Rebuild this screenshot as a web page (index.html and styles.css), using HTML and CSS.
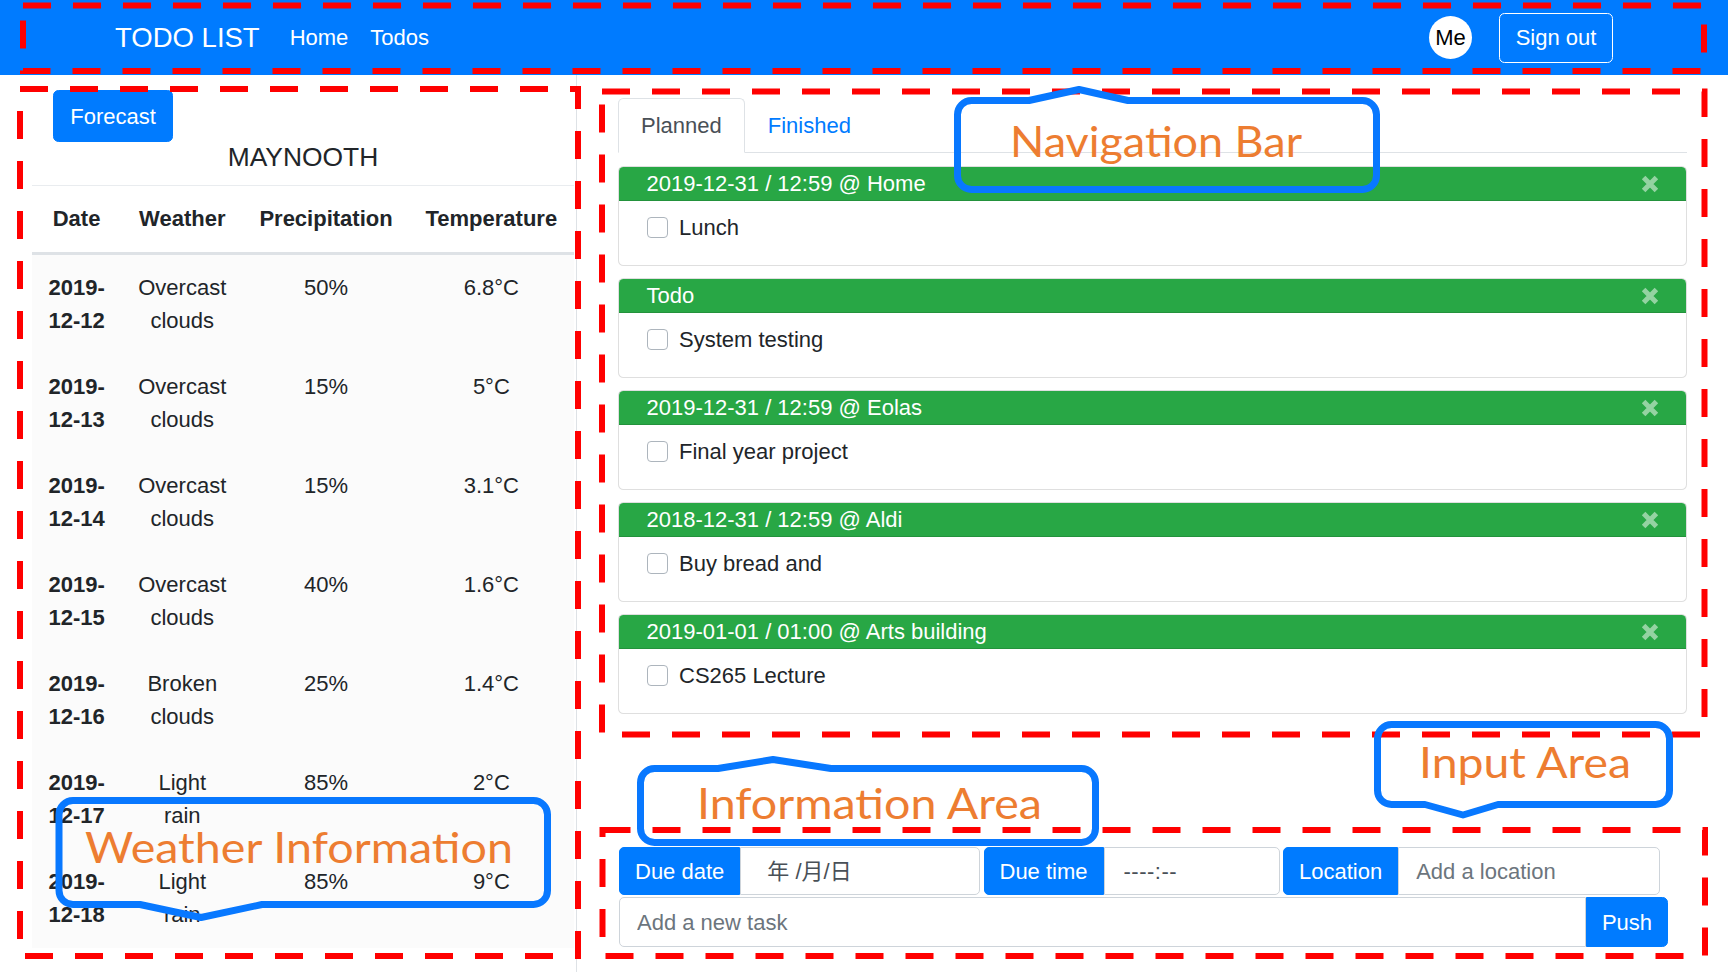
FILE: index.html
```html
<!DOCTYPE html>
<html lang="en">
<head>
<meta charset="utf-8">
<title>TODO LIST</title>
<link rel="stylesheet" href="styles.css">
</head>
<body>
<nav class="navbar">
  <a class="brand" href="#">TODO LIST</a>
  <a class="nav-link" href="#">Home</a>
  <a class="nav-link" href="#">Todos</a>
  <span class="spacer"></span>
  <span class="avatar">Me</span>
  <button class="btn-signout" type="button">Sign out</button>
</nav>

<main class="page">
  <aside class="weather-col">
    <button class="btn-forecast" type="button">Forecast</button>
    <h2 class="city">MAYNOOTH</h2>
    <table class="weather-table">
      <thead>
        <tr>
          <th class="col-date">Date</th>
          <th class="col-weather">Weather</th>
          <th class="col-precip">Precipitation</th>
          <th class="col-temp">Temperature</th>
        </tr>
      </thead>
      <tbody>
        <tr><td class="date">2019-12-12</td><td>Overcast clouds</td><td>50%</td><td>6.8°C</td></tr>
        <tr><td class="date">2019-12-13</td><td>Overcast clouds</td><td>15%</td><td>5°C</td></tr>
        <tr><td class="date">2019-12-14</td><td>Overcast clouds</td><td>15%</td><td>3.1°C</td></tr>
        <tr><td class="date">2019-12-15</td><td>Overcast clouds</td><td>40%</td><td>1.6°C</td></tr>
        <tr><td class="date">2019-12-16</td><td>Broken clouds</td><td>25%</td><td>1.4°C</td></tr>
        <tr><td class="date">2019-12-17</td><td>Light rain</td><td>85%</td><td>2°C</td></tr>
        <tr><td class="date">2019-12-18</td><td>Light rain</td><td>85%</td><td>9°C</td></tr>
      </tbody>
    </table>
  </aside>

  <section class="todo-col">
    <ul class="tabs">
      <li class="tab active">Planned</li>
      <li class="tab">Finished</li>
    </ul>

    <div class="cards">
      <div class="card">
        <div class="card-header"><span>2019-12-31 / 12:59 @ Home</span>
          <svg class="close" width="18" height="18" viewBox="0 0 18 18"><path d="M2.6 2.6L15.4 15.4M15.4 2.6L2.6 15.4"/></svg></div>
        <div class="card-body"><span class="check"></span><span>Lunch</span></div>
      </div>
      <div class="card">
        <div class="card-header"><span>Todo</span>
          <svg class="close" width="18" height="18" viewBox="0 0 18 18"><path d="M2.6 2.6L15.4 15.4M15.4 2.6L2.6 15.4"/></svg></div>
        <div class="card-body"><span class="check"></span><span>System testing</span></div>
      </div>
      <div class="card">
        <div class="card-header"><span>2019-12-31 / 12:59 @ Eolas</span>
          <svg class="close" width="18" height="18" viewBox="0 0 18 18"><path d="M2.6 2.6L15.4 15.4M15.4 2.6L2.6 15.4"/></svg></div>
        <div class="card-body"><span class="check"></span><span>Final year project</span></div>
      </div>
      <div class="card">
        <div class="card-header"><span>2018-12-31 / 12:59 @ Aldi</span>
          <svg class="close" width="18" height="18" viewBox="0 0 18 18"><path d="M2.6 2.6L15.4 15.4M15.4 2.6L2.6 15.4"/></svg></div>
        <div class="card-body"><span class="check"></span><span>Buy bread and</span></div>
      </div>
      <div class="card">
        <div class="card-header"><span>2019-01-01 / 01:00 @ Arts building</span>
          <svg class="close" width="18" height="18" viewBox="0 0 18 18"><path d="M2.6 2.6L15.4 15.4M15.4 2.6L2.6 15.4"/></svg></div>
        <div class="card-body"><span class="check"></span><span>CS265 Lecture</span></div>
      </div>
    </div>

    <form class="input-area">
      <div class="meta-row">
        <div class="group group-date">
          <span class="group-label">Due date</span>
          <input class="field field-date" type="text" value="年 /月/日">
        </div>
        <div class="group group-time">
          <span class="group-label">Due time</span>
          <input class="field field-time" type="text" value="----:--">
        </div>
        <div class="group group-loc">
          <span class="group-label">Location</span>
          <input class="field" type="text" placeholder="Add a location">
        </div>
      </div>
      <div class="task-row">
        <input class="field field-task" type="text" placeholder="Add a new task">
        <button class="btn-push" type="button">Push</button>
      </div>
    </form>
  </section>
</main>

<svg class="annotations" width="1728" height="972" viewBox="0 0 1728 972">
  <g class="dash">
    <rect x="23" y="5.5" width="1681" height="65.5"/>
    <rect x="20" y="89" width="558" height="867"/>
    <rect x="602" y="91.5" width="1102.5" height="643"/>
    <rect x="602.5" y="830" width="1102.5" height="126"/>
  </g>
  <g class="callout">
    <path d="M971.5 100.5 L1029 100.5 L1079 89.5 L1128 100.5 L1362.5 100.5 A14 14 0 0 1 1376.5 114.5 L1376.5 175.5 A14 14 0 0 1 1362.5 189.5 L971.5 189.5 A14 14 0 0 1 957.5 175.5 L957.5 114.5 A14 14 0 0 1 971.5 100.5 Z"/>
    <path d="M73 800.5 L533.5 800.5 A14 14 0 0 1 547.5 814.5 L547.5 890.5 A14 14 0 0 1 533.5 904.5 L262 904.5 L201 917.5 L140 904.5 L73 904.5 A14 14 0 0 1 59 890.5 L59 814.5 A14 14 0 0 1 73 800.5 Z"/>
    <path d="M654.5 768.5 L718 768.5 L773 759.5 L831 768.5 L1081.5 768.5 A14 14 0 0 1 1095.5 782.5 L1095.5 828.5 A14 14 0 0 1 1081.5 842.5 L654.5 842.5 A14 14 0 0 1 640.5 828.5 L640.5 782.5 A14 14 0 0 1 654.5 768.5 Z"/>
    <path d="M1391.5 724.5 L1655.5 724.5 A14 14 0 0 1 1669.5 738.5 L1669.5 790.5 A14 14 0 0 1 1655.5 804.5 L1498 804.5 L1463 815 L1425 804.5 L1391.5 804.5 A14 14 0 0 1 1377.5 790.5 L1377.5 738.5 A14 14 0 0 1 1391.5 724.5 Z"/>
  </g>
  <text class="callout-text" x="1010" y="157" textLength="292" lengthAdjust="spacingAndGlyphs">Navigation Bar</text>
  <text class="callout-text" x="85" y="863" textLength="428" lengthAdjust="spacingAndGlyphs">Weather Information</text>
  <text class="callout-text" x="697" y="819" textLength="345" lengthAdjust="spacingAndGlyphs">Information Area</text>
  <text class="callout-text" x="1419" y="778" textLength="212" lengthAdjust="spacingAndGlyphs">Input Area</text>
</svg>
</body>
</html>
```

FILE: styles.css
```css
* { box-sizing: border-box; }

html, body { margin: 0; padding: 0; }

body {
  position: relative;
  font-family: "Liberation Sans", Arial, "Noto Sans CJK SC", sans-serif;
  font-size: 22px;
  line-height: 33px;
  color: #212529;
  background: #fff;
}

/* ---------- navbar ---------- */
.navbar {
  display: flex;
  align-items: center;
  height: 75px;
  padding: 0 115px;
  background: #007bff;
}

.brand {
  font-size: 27.5px;
  line-height: 41px;
  color: #fff;
  text-decoration: none;
  margin-right: 19px;
}

.nav-link {
  color: #fff;
  text-decoration: none;
  padding: 0 11px;
}

.spacer { flex: 1; }

.avatar {
  display: flex;
  align-items: center;
  justify-content: center;
  width: 43px;
  height: 43px;
  border-radius: 50%;
  background: #fff;
  color: #000;
  font-size: 22px;
  margin-right: 27px;
}

.btn-signout {
  font: inherit;
  color: #fff;
  background: transparent;
  border: 1.5px solid #fff;
  border-radius: 5.5px;
  height: 50px;
  width: 114px;
  padding: 0;
}

/* ---------- layout ---------- */
.page {
  display: flex;
  min-height: calc(100vh - 75px);
}

.weather-col {
  width: 577px;
  flex: none;
  padding: 15px 2px 0 32px;
  border-right: 1px solid #dee2e6;
}

.btn-forecast {
  display: block;
  font: inherit;
  color: #fff;
  background: #007bff;
  border: 1px solid #007bff;
  border-radius: 5.5px;
  height: 52px;
  width: 120px;
  margin-left: 21px;
  padding: 0;
}

.city {
  margin: 0 0 11px;
  font-size: 26.4px;
  line-height: 31.7px;
  font-weight: 400;
  text-align: center;
  color: #212529;
}

.weather-table {
  width: 542px;
  border-collapse: collapse;
  text-align: center;
}

.weather-table th {
  padding: 16.5px 4px;
  font-weight: 700;
  border-top: 1.5px solid #e9ecef;
  border-bottom: 3px solid #dee2e6;
  vertical-align: bottom;
}

.col-date { width: 89px; }
.col-weather { width: 122px; }
.col-precip { width: 165px; }
.col-temp { width: 165px; }

.weather-table tbody { background: #fbfbfb; }

.weather-table td {
  padding: 16.5px 16.5px;
  vertical-align: top;
  border: none;
}

.weather-table td.date {
  font-weight: 700;
  padding: 16.5px 12px;
}

/* ---------- todo column ---------- */
.todo-col {
  flex: 1;
  padding: 23px 41px 0 41px;
}

.tabs {
  display: flex;
  list-style: none;
  margin: 0;
  padding: 0;
  border-bottom: 1px solid #dee2e6;
}

.tab {
  padding: 10px 22px;
  border: 1px solid transparent;
  border-radius: 5.5px 5.5px 0 0;
  margin-bottom: -1px;
  color: #007bff;
}

.tab.active {
  color: #495057;
  background: #fff;
  border-color: #dee2e6 #dee2e6 #fff;
}

.cards { margin-top: 13px; }

.card {
  border: 1px solid rgba(0, 0, 0, 0.125);
  border-radius: 5.5px;
  overflow: hidden;
  margin-bottom: 12px;
  background: #fff;
}

.card-header {
  display: flex;
  align-items: center;
  justify-content: space-between;
  height: 34px;
  padding: 0 27px 0 27.5px;
  background: #28a745;
  color: #fff;
  border-bottom: 1px solid rgba(0, 0, 0, 0.125);
}

.close { flex: none; }

.close path {
  stroke: rgba(255, 255, 255, 0.5);
  stroke-width: 5;
  fill: none;
}

.card-body {
  display: flex;
  align-items: center;
  padding: 10px 27.5px 21px 28px;
}

.check {
  width: 21px;
  height: 21px;
  border: 1px solid #adb5bd;
  border-radius: 4px;
  background: #fff;
  margin-right: 11px;
  flex: none;
}

/* ---------- input area ---------- */
.input-area {
  margin: 133px 0 0 1px;
}

.meta-row {
  display: flex;
  gap: 3.5px;
}

.group {
  display: flex;
  height: 48px;
}

.group-date { width: 361px; }
.group-time { width: 296px; }
.group-loc { width: 377px; }

.group-label {
  display: flex;
  align-items: center;
  padding: 0 15px;
  background: #007bff;
  color: #fff;
  border: 1px solid #007bff;
  border-radius: 5px 0 0 5px;
  white-space: nowrap;
}

.field {
  flex: 1;
  min-width: 0;
  font: inherit;
  color: #495057;
  border: 1px solid #ced4da;
  border-radius: 0 5px 5px 0;
  padding: 0 17px;
  background: #fff;
  outline: none;
}

.field::placeholder { color: #6c757d; }

.field-date { padding-left: 26px; }
.field-time { padding-left: 19px; letter-spacing: 0.5px; }

.task-row {
  display: flex;
  width: 1049px;
  height: 50px;
  margin-top: 2px;
}

.field-task {
  border-radius: 5px 0 0 5px;
}

.btn-push {
  width: 82px;
  font: inherit;
  color: #fff;
  background: #007bff;
  border: 1px solid #007bff;
  border-radius: 0 5.5px 5.5px 0;
  padding: 0;
}

/* ---------- annotation overlay ---------- */
.annotations {
  position: absolute;
  top: 0;
  left: 0;
  pointer-events: none;
}

.dash rect {
  fill: none;
  stroke: #ff0000;
  stroke-width: 6;
  stroke-dasharray: 28 22;
}

.callout path {
  fill: none;
  stroke: #0878ff;
  stroke-width: 7;
  stroke-linejoin: round;
}

.callout-text {
  font-family: Lato, "Open Sans", sans-serif;
  font-size: 43px;
  fill: #ed7d31;
}
```
